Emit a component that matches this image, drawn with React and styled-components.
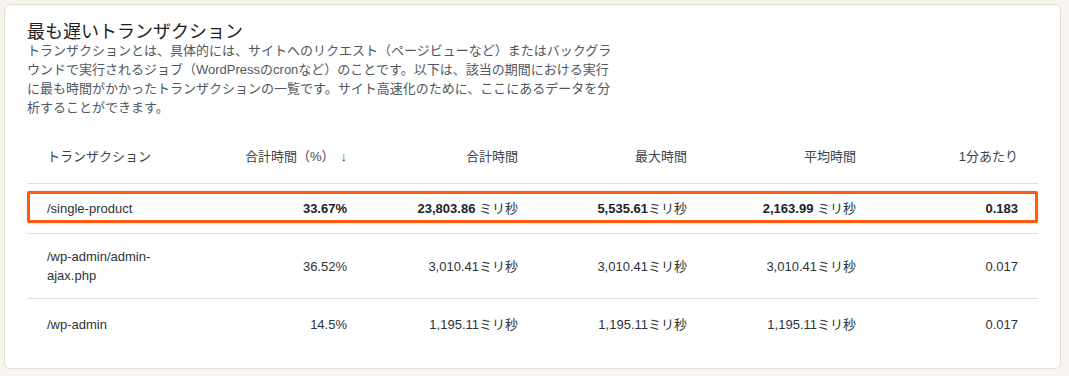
import React from "react";
import styled, { createGlobalStyle } from "styled-components";

const GlobalStyle = createGlobalStyle`
  body {
    margin: 0;
    background: #f7f3ef;
    font-family: "Liberation Sans", "Noto Sans CJK JP", sans-serif;
    font-size: 13px;
    color: #2c3338;
  }
`;

const columns = [
  { label: "トランザクション", align: "left" },
  { label: "合計時間（%）", align: "right", sorted: true },
  { label: "合計時間", align: "right" },
  { label: "最大時間", align: "right" },
  { label: "平均時間", align: "right" },
  { label: "1分あたり", align: "right" },
];

const rows = [
  {
    name: "/single-product",
    highlighted: true,
    cells: [
      ["33.67%", ""],
      ["23,803.86", " ミリ秒"],
      ["5,535.61", "ミリ秒"],
      ["2,163.99", " ミリ秒"],
      ["0.183", ""],
    ],
  },
  {
    name: "/wp-admin/admin-ajax.php",
    cells: [
      ["36.52%", ""],
      ["3,010.41", "ミリ秒"],
      ["3,010.41", "ミリ秒"],
      ["3,010.41", "ミリ秒"],
      ["0.017", ""],
    ],
  },
  {
    name: "/wp-admin",
    last: true,
    cells: [
      ["14.5%", ""],
      ["1,195.11", "ミリ秒"],
      ["1,195.11", "ミリ秒"],
      ["1,195.11", "ミリ秒"],
      ["0.017", ""],
    ],
  },
];

export default function App() {
  return (
    <>
      <GlobalStyle />
      <Page>
        <Card>
          <Title>最も遅いトランザクション</Title>
          <Description>
            トランザクションとは、具体的には、サイトへのリクエスト（ページビューなど）またはバックグラウンドで実行されるジョブ（WordPressのcronなど）のことです。以下は、該当の期間における実行に最も時間がかかったトランザクションの一覧です。サイト高速化のために、ここにあるデータを分析することができます。
          </Description>
          <Table>
            <HeaderRow>
              {columns.map((col) => (
                <HeadCell key={col.label} $align={col.align}>
                  {col.label}
                  {col.sorted && <SortArrow>↓</SortArrow>}
                </HeadCell>
              ))}
            </HeaderRow>
            {rows.map((row) => (
              <Row key={row.name} $highlighted={row.highlighted} $last={row.last}>
                <Cell $align="left">{row.name}</Cell>
                {row.cells.map(([num, unit], i) => (
                  <Cell key={i} $align="right">
                    <Num $bold={row.highlighted}>{num}</Num>
                    {unit}
                  </Cell>
                ))}
              </Row>
            ))}
          </Table>
        </Card>
      </Page>
    </>
  );
}

const Page = styled.div`
  padding: 4px 8px 6px 4px;
`;

const Card = styled.section`
  background: #ffffff;
  border: 1px solid #e6ded7;
  border-radius: 6px;
  padding: 19px 22px 19px 22px;
`;

const Title = styled.h2`
  margin: 0;
  font-size: 18px;
  line-height: 17px;
  font-weight: 400;
  color: #1e1e1e;
`;

const Description = styled.p`
  margin: 0;
  max-width: 590px;
  font-size: 13px;
  line-height: 19px;
  color: #50575e;
`;

const Table = styled.div`
  margin-top: 14px;
`;

const grid = `
  display: grid;
  grid-template-columns: 170px 170px 171px 169px 169px 1fr;
  align-items: center;
`;

const HeaderRow = styled.div`
  ${grid}
  padding: 16px 0 17px;
  border-bottom: 1px solid #e6ded7;
  color: #3c434a;
`;

const HeadCell = styled.div`
  padding: 0 20px;
  line-height: 19px;
  text-align: ${(p) => p.$align};
  white-space: nowrap;
`;

const SortArrow = styled.span`
  margin-left: 6px;
`;

const Row = styled.div`
  ${grid}
  position: relative;
  min-height: 50px;
  padding: 13px 0;
  box-sizing: border-box;
  border-bottom: ${(p) => (p.$last ? "none" : "1px solid #e6ded7")};

  ${(p) =>
    p.$highlighted &&
    `
    &::after {
      content: "";
      position: absolute;
      top: 7px;
      bottom: 10px;
      left: 0;
      right: 0;
      border: 3px solid #ff5a0d;
      border-radius: 2px;
      box-shadow: 0 0 3px rgba(0, 0, 0, 0.15);
      pointer-events: none;
    }
  `}
`;

const Cell = styled.div`
  padding: 0 20px;
  line-height: 19px;
  text-align: ${(p) => p.$align};
  color: #2c3338;
`;

const Num = styled.span`
  font-weight: ${(p) => (p.$bold ? 700 : 400)};
  color: ${(p) => (p.$bold ? "#1d2327" : "inherit")};
`;
